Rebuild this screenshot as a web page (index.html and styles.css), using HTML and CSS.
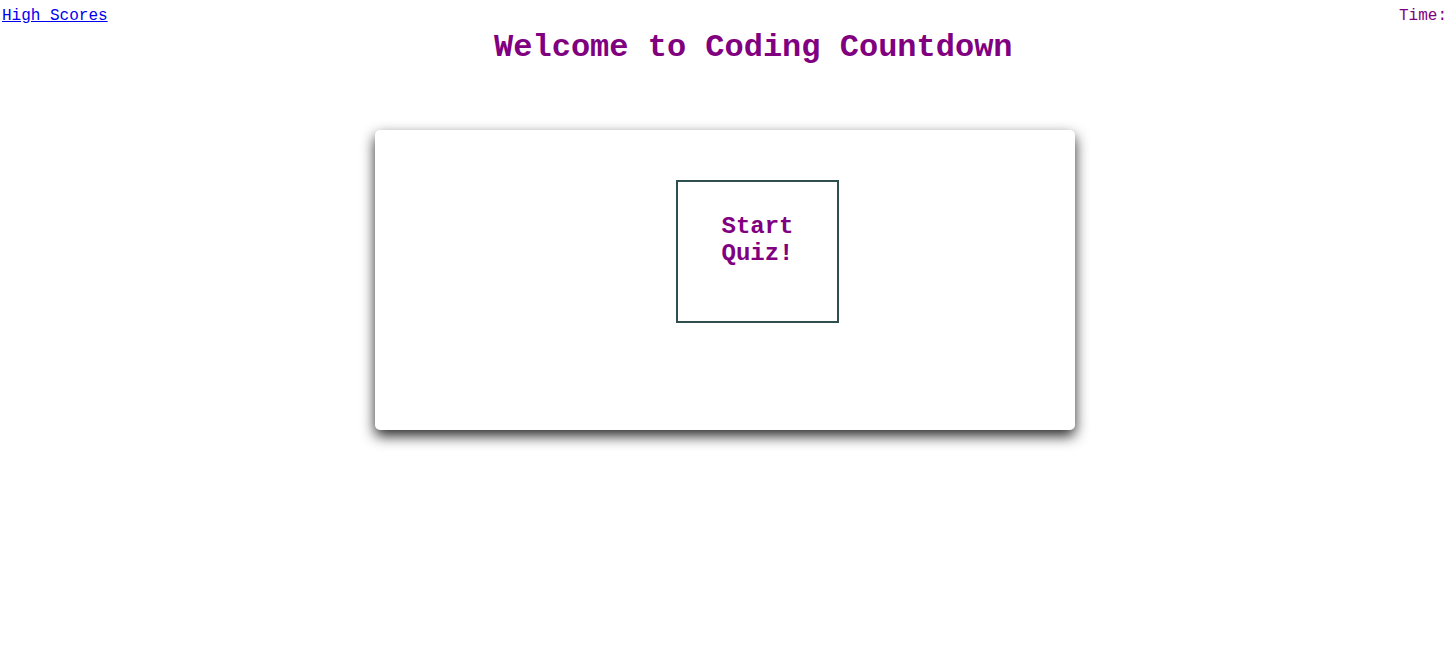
FILE: index.html
```html
<!DOCTYPE html>
<html>
<head>
<meta charset="utf-8">
<title>Coding Countdown</title>
<link rel="stylesheet" href="styles.css">
</head>
<body>
<header class="top">
  <a class="scores" href="#">High Scores</a>
  <h1 class="title">Welcome to Coding Countdown</h1>
  <span class="time">Time:</span>
</header>
<main class="stage">
  <section class="card">
    <button class="start"><span class="start-label">Start Quiz!</span></button>
  </section>
</main>
</body>
</html>
```
FILE: styles.css
```css
html, body {
  margin: 0;
  padding: 0;
  background: #fff;
}
body {
  font-family: "Liberation Mono", "Courier New", monospace;
  color: #800080;
  min-height: 672px;
}
.top {
  display: flex;
  justify-content: space-between;
  align-items: flex-start;
  padding-top: 7px;
}
.scores {
  color: #0000ee;
  font-size: 16px;
  padding-left: 2px;
}
.time {
  font-size: 16px;
  color: #800080;
}
.title {
  margin: 22px 0 0 0;
  font-size: 32px;
  font-weight: bold;
  color: #800080;
}
.stage {
  display: flex;
  justify-content: center;
  padding-top: 64px;
}
.card {
  width: 700px;
  height: 300px;
  box-sizing: border-box;
  margin-left: 3px;
  background: #fff;
  border-radius: 5px;
  box-shadow: 0 6px 14px rgba(0, 0, 0, 0.85);
  padding-top: 50px;
}
.start {
  display: flex;
  flex-direction: column;
  justify-content: flex-start;
  align-items: center;
  margin-left: 301px;
  width: 163px;
  height: 143px;
  box-sizing: border-box;
  border: 2px solid #2f4f4f;
  background: #fff;
  padding: 31px 40px 0;
  text-align: center;
  font-family: "Liberation Mono", "Courier New", monospace;
  font-size: 24px;
  font-weight: bold;
  color: #800080;
  line-height: 27px;
}
.start-label {
  display: block;
}
```
